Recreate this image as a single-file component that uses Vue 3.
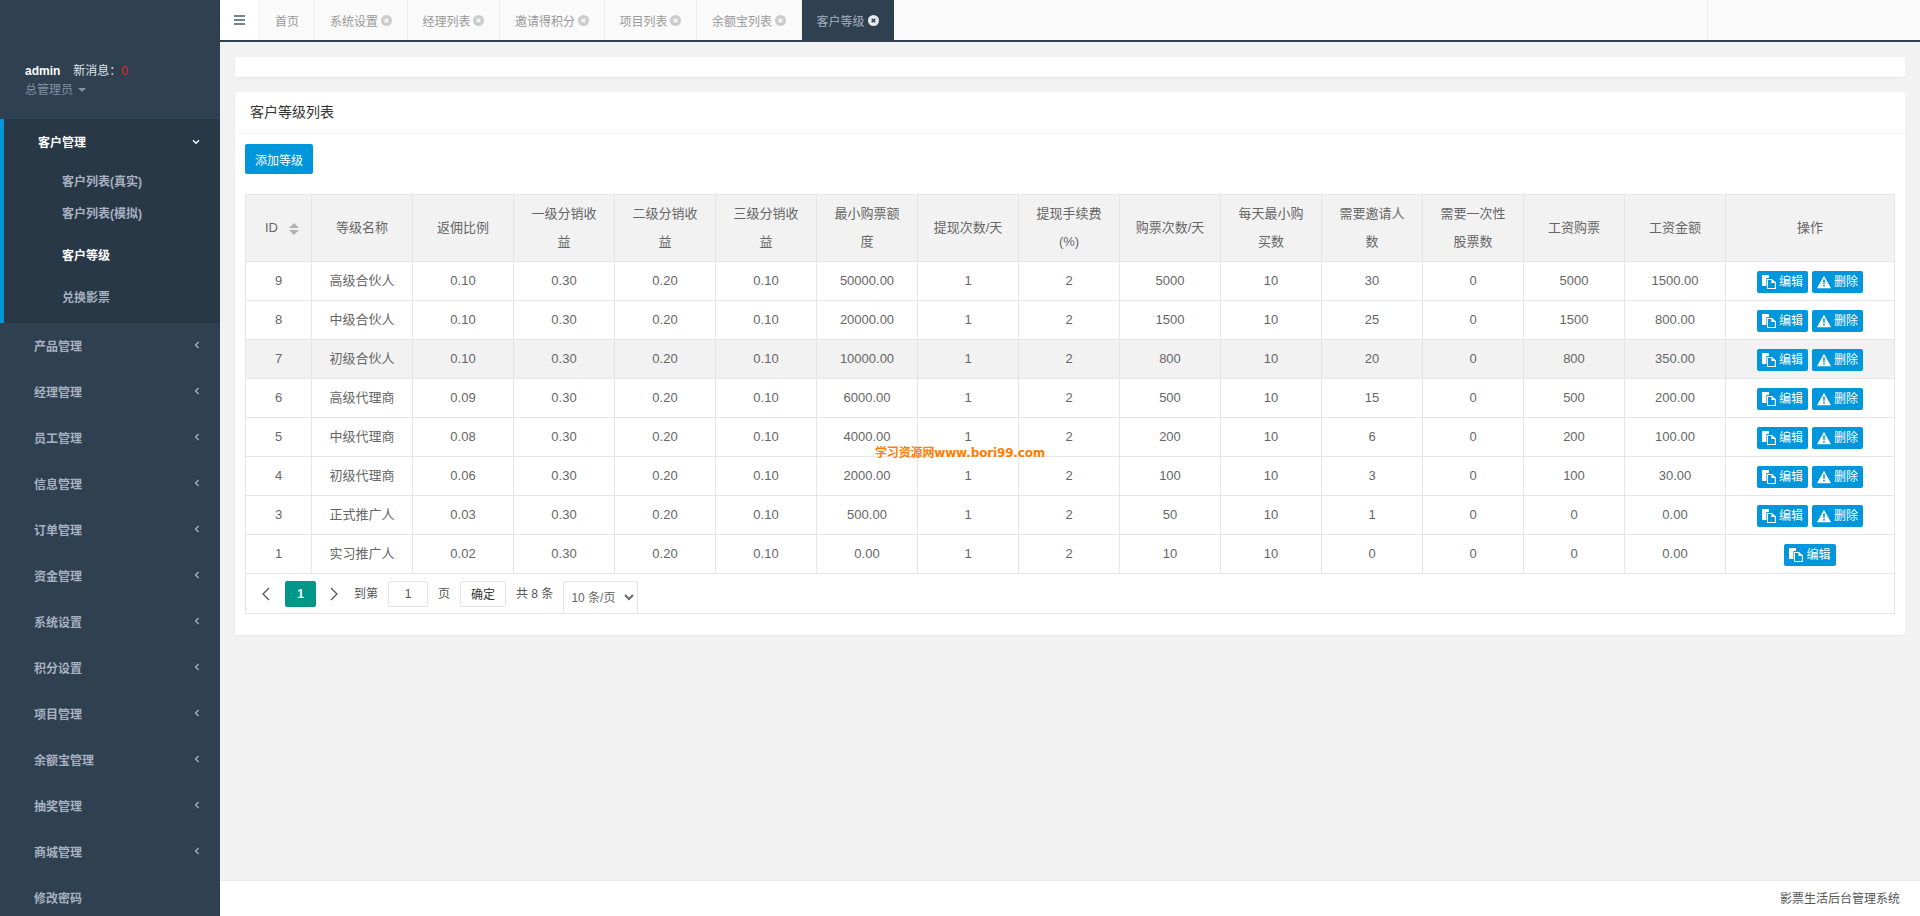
<template>
  <div class="layout">
    <!-- 左侧菜单 -->
    <aside class="sidebar">
      <div class="profile">
        <div class="profile-line">
          <span class="name">admin</span>
          <span class="msg">新消息：<em>0</em></span>
        </div>
        <div class="role">总管理员 <i class="caret"></i></div>
      </div>
      <div class="nav-active">
        <div class="nav-head">
          <span>客户管理</span>
          <svg width="8" height="6" viewBox="0 0 8 6" class="arrow-down"><path d="M1 1.2l3 3 3-3" fill="none" stroke="#fff" stroke-width="1.4"/></svg>
        </div>
        <ul class="sub-nav">
          <li v-for="item in subMenu" :key="item.name" :class="[item.cls, { on: item.on }]">{{ item.name }}</li>
        </ul>
      </div>
      <div v-for="item in menu" :key="item" class="nav-item">
        <span>{{ item }}</span>
        <svg v-if="item !== '修改密码'" width="6" height="8" viewBox="0 0 6 8"><path d="M4.6 1L1.6 4l3 3" fill="none" stroke="#a7b1c2" stroke-width="1.3"/></svg>
      </div>
    </aside>

    <div class="main">
      <!-- 顶部选项卡 -->
      <div class="tabbar">
        <div class="menu-btn">
          <svg width="11" height="10" viewBox="0 0 11 10"><path d="M0 1h11M0 5h11M0 9h11" stroke="#76838f" stroke-width="2"/></svg>
        </div>
        <div v-for="tab in tabs" :key="tab" class="tab">
          {{ tab }}
          <svg v-if="tab !== '首页'" class="close" width="11" height="11" viewBox="0 0 11 11">
            <circle cx="5.5" cy="5.5" r="5.5" fill="#ccc"/>
            <path d="M3.7 3.7l3.6 3.6M7.3 3.7l-3.6 3.6" stroke="#fafafa" stroke-width="1.5"/>
          </svg>
        </div>
        <div class="tab active">
          客户等级
          <svg class="close" width="11" height="11" viewBox="0 0 11 11">
            <circle cx="5.5" cy="5.5" r="5.5" fill="#e8ebee"/>
            <path d="M3.7 3.7l3.6 3.6M7.3 3.7l-3.6 3.6" stroke="#2f4050" stroke-width="1.5"/>
          </svg>
        </div>
        <div class="tab-fill"></div>
        <div class="tab-right"></div>
      </div>

      <div class="content">
        <div class="card blank"></div>
        <div class="card">
          <div class="card-title">客户等级列表</div>
          <div class="card-body">
            <button class="add-btn">添加等级</button>
            <div class="table-box">
              <table>
                <colgroup>
                  <col class="col-id">
                  <col v-for="n in 14" :key="n" class="col-n">
                  <col class="col-op">
                </colgroup>
                <thead>
                  <tr>
                    <th>
                      <span class="sort-wrap">ID<i class="sort"><b class="up"></b><b class="down"></b></i></span>
                    </th>
                    <th v-for="h in headers" :key="h">{{ h }}</th>
                  </tr>
                </thead>
                <tbody>
                  <tr v-for="row in rows" :key="row[0]" :class="{ hover: row[0] === 7 }">
                    <td v-for="(val, i) in row" :key="i">{{ val }}</td>
                    <td>
                      <div class="ops">
                        <button class="op-btn">
                          <svg width="14" height="14" viewBox="0 0 14 14">
                            <path d="M0 0h7v3H4.4v8H0z" fill="#fff"/>
                            <path d="M5 4h5l4 3.6V14H5z" fill="#fff"/>
                            <path d="M6 5h3.4v3h3.4v5H6z" fill="#0096dc"/>
                          </svg>
                          编辑
                        </button>
                        <button v-if="row[0] !== 1" class="op-btn">
                          <svg width="14" height="14" viewBox="0 0 14 14">
                            <path d="M7 .8l7 12.4H0z" fill="#fff"/>
                            <path d="M6.1 4.6h1.8l-.3 4.6H6.4zM6.2 10h1.6v1.6H6.2z" fill="#0096dc"/>
                          </svg>
                          删除
                        </button>
                      </div>
                    </td>
                  </tr>
                </tbody>
              </table>
              <!-- 分页 -->
              <div class="pager">
                <svg class="chev" width="9" height="14" viewBox="0 0 9 14"><path d="M8 1L2 7l6 6" fill="none" stroke="#555" stroke-width="1.3"/></svg>
                <span class="page-cur">1</span>
                <svg class="chev next" width="9" height="14" viewBox="0 0 9 14"><path d="M1 1l6 6-6 6" fill="none" stroke="#555" stroke-width="1.3"/></svg>
                <span class="go">到第</span>
                <input class="page-input" value="1">
                <span class="unit">页</span>
                <button class="ok-btn">确定</button>
                <span class="total">共 8 条</span>
                <select class="size-select">
                  <option>10 条/页</option>
                  <option>20 条/页</option>
                </select>
              </div>
            </div>
          </div>
        </div>
      </div>

      <div class="footer">影票生活后台管理系统</div>
    </div>

    <div class="watermark">学习资源网www.bori99.com</div>
  </div>
</template>

<script setup>
const subMenu = [
  { name: '客户列表(真实)', cls: 'short' },
  { name: '客户列表(模拟)', cls: 'short' },
  { name: '客户等级', cls: 'tall', on: true },
  { name: '兑换影票', cls: 'tall' }
]

const menu = ['产品管理', '经理管理', '员工管理', '信息管理', '订单管理', '资金管理', '系统设置', '积分设置', '项目管理', '余额宝管理', '抽奖管理', '商城管理', '修改密码']

const tabs = ['首页', '系统设置', '经理列表', '邀请得积分', '项目列表', '余额宝列表']

const headers = ['等级名称', '返佣比例', '一级分销收益', '二级分销收益', '三级分销收益', '最小购票额度', '提现次数/天', '提现手续费(%)', '购票次数/天', '每天最小购买数', '需要邀请人数', '需要一次性股票数', '工资购票', '工资金额', '操作']

const rows = [
  [9, '高级合伙人', '0.10', '0.30', '0.20', '0.10', '50000.00', 1, 2, 5000, 10, 30, 0, 5000, '1500.00'],
  [8, '中级合伙人', '0.10', '0.30', '0.20', '0.10', '20000.00', 1, 2, 1500, 10, 25, 0, 1500, '800.00'],
  [7, '初级合伙人', '0.10', '0.30', '0.20', '0.10', '10000.00', 1, 2, 800, 10, 20, 0, 800, '350.00'],
  [6, '高级代理商', '0.09', '0.30', '0.20', '0.10', '6000.00', 1, 2, 500, 10, 15, 0, 500, '200.00'],
  [5, '中级代理商', '0.08', '0.30', '0.20', '0.10', '4000.00', 1, 2, 200, 10, 6, 0, 200, '100.00'],
  [4, '初级代理商', '0.06', '0.30', '0.20', '0.10', '2000.00', 1, 2, 100, 10, 3, 0, 100, '30.00'],
  [3, '正式推广人', '0.03', '0.30', '0.20', '0.10', '500.00', 1, 2, 50, 10, 1, 0, 0, '0.00'],
  [1, '实习推广人', '0.02', '0.30', '0.20', '0.10', '0.00', 1, 2, 10, 10, 0, 0, 0, '0.00']
]
</script>

<style>
body {
  margin: 0;
  overflow: hidden;
}
</style>

<style scoped>
.layout {
  position: relative;
  display: flex;
  height: 916px;
  overflow: hidden;
  font-family: "Liberation Sans", "Noto Sans CJK SC", sans-serif;
  font-size: 13px;
  color: #666;
  background: #f2f2f2;
}

/* 左侧菜单 */
.sidebar {
  width: 220px;
  flex: none;
  background: #2f4050;
  font-size: 12px;
  font-weight: 600;
  color: #a7b1c2;
}
.profile {
  height: 119px;
  padding: 62px 0 0 25px;
  box-sizing: border-box;
}
.profile-line {
  line-height: 18px;
}
.name {
  color: #fff;
  margin-right: 13px;
}
.msg {
  color: #dfe4ed;
  font-weight: 400;
}
.msg em {
  font-style: normal;
  color: #ed1c24;
}
.role {
  margin-top: 1px;
  line-height: 18px;
  font-weight: 400;
  color: #7f93a6;
}
.caret {
  display: inline-block;
  margin-left: 2px;
  vertical-align: 2px;
  border-top: 4px solid #7f93a6;
  border-left: 4px solid transparent;
  border-right: 4px solid transparent;
}
.nav-active {
  height: 204px;
  border-left: 4px solid #0096dc;
  background: #293846;
  box-sizing: border-box;
}
.nav-head {
  display: flex;
  align-items: center;
  justify-content: space-between;
  height: 45px;
  padding: 0 20px 0 34px;
  color: #fff;
}
.sub-nav {
  list-style: none;
  margin: 0;
  padding: 2px 0 0 58px;
}
.sub-nav .short {
  line-height: 32px;
}
.sub-nav .tall {
  line-height: 42px;
}
.sub-nav .short + .tall {
  margin-top: 5px;
}
.sub-nav .on {
  color: #fff;
}
.nav-item {
  display: flex;
  align-items: center;
  justify-content: space-between;
  height: 46px;
  box-sizing: border-box;
  padding: 0 20px 2px 34px;
}

/* 选项卡 */
.main {
  flex: 1;
  min-width: 0;
  display: flex;
  flex-direction: column;
}
.tabbar {
  display: flex;
  height: 42px;
  flex: none;
  box-sizing: border-box;
  border-bottom: 2px solid #2f4050;
  background: #fafafa;
  font-size: 12px;
  color: #999;
}
.menu-btn {
  width: 39px;
  display: flex;
  align-items: center;
  justify-content: center;
  background: #fff;
  border-right: 1px solid #eee;
}
.tab {
  display: flex;
  align-items: center;
  padding: 0 15px;
  border-right: 1px solid #eee;
}
.close {
  margin-left: 2.5px;
}
.tab.active {
  background: #2f4050;
  color: #a7b1c2;
  padding-right: 15px;
  border-right: none;
}
.tab.active .close {
  margin-left: 3px;
}
.tab-fill {
  flex: 1;
}
.tab-right {
  width: 212px;
  border-left: 1px solid #eee;
}

/* 内容区 */
.content {
  flex: 1;
  padding: 15px;
  min-height: 0;
}
.card {
  background: #fff;
  border-radius: 2px;
  box-shadow: 0 1px 2px rgba(0, 0, 0, 0.05);
}
.blank {
  height: 20px;
  margin-bottom: 15px;
}
.card-title {
  height: 41px;
  line-height: 41px;
  padding-left: 15px;
  font-size: 14px;
  color: #333;
  border-bottom: 1px solid #f6f6f6;
}
.card-body {
  padding: 10px 10px 21px;
}
.add-btn {
  display: block;
  width: 68px;
  height: 30px;
  padding: 0;
  border: none;
  border-radius: 2px;
  background: #0096dc;
  color: #fff;
  font: inherit;
  font-size: 12px;
}
.table-box {
  margin-top: 20px;
  border: 1px solid #e6e6e6;
}
table {
  width: 1648px;
  table-layout: fixed;
  border-collapse: separate;
  border-spacing: 0;
}
.col-id {
  width: 66px;
}
.col-n {
  width: 101px;
}
.col-op {
  width: 168px;
}
th, td {
  text-align: center;
  border-right: 1px solid #e6e6e6;
  border-bottom: 1px solid #e6e6e6;
  font-weight: 400;
}
th:last-child, td:last-child {
  border-right: none;
}
th {
  padding: 5px 15px;
  line-height: 28px;
  background: #f2f2f2;
}
td {
  padding: 9px 15px;
  line-height: 20px;
}
tr.hover td {
  background: #f2f2f2;
}
.sort-wrap {
  margin-left: 4px;
  white-space: nowrap;
}
.sort {
  display: inline-block;
  vertical-align: middle;
  margin-left: 11px;
  width: 10px;
}
.sort b {
  display: block;
  border-left: 5px solid transparent;
  border-right: 5px solid transparent;
}
.sort .up {
  border-bottom: 5px solid #b2b2b2;
  margin-bottom: 2px;
}
.sort .down {
  border-top: 5px solid #b2b2b2;
}
.ops {
  display: flex;
  justify-content: center;
  gap: 4px;
  margin: 0 -15px -2px;
}
.op-btn {
  display: flex;
  align-items: center;
  gap: 3px;
  height: 22px;
  padding: 0 5px;
  border: none;
  border-radius: 2px;
  background: #0096dc;
  color: #fff;
  font: inherit;
  font-size: 12px;
  line-height: 22px;
  white-space: nowrap;
}

/* 分页 */
.pager {
  display: flex;
  align-items: flex-start;
  height: 39px;
  box-sizing: border-box;
  padding: 7px 0 0 15px;
  font-size: 12px;
  line-height: 26px;
  color: #555;
}
.chev {
  margin-top: 6px;
}
.page-cur {
  width: 31px;
  height: 26px;
  margin-left: 15px;
  text-align: center;
  background: #009688;
  color: #fff;
  border-radius: 2px;
  font-weight: 600;
}
.next {
  margin-left: 14px;
}
.go {
  margin-left: 15px;
}
.page-input {
  width: 40px;
  height: 26px;
  margin-left: 10px;
  padding: 0;
  box-sizing: border-box;
  border: 1px solid #e6e6e6;
  border-radius: 2px;
  text-align: center;
  font: inherit;
  font-size: 12px;
  color: #555;
}
.unit {
  margin-left: 10px;
}
.ok-btn {
  width: 46px;
  height: 26px;
  margin-left: 10px;
  padding: 0;
  background: #fff;
  border: 1px solid #e6e6e6;
  border-radius: 2px;
  font: inherit;
  font-size: 12px;
  color: #333;
}
.total {
  margin-left: 10px;
}
.size-select {
  width: 75px;
  height: 33px;
  margin-left: 10px;
  padding-left: 3px;
  background: #fff;
  border: 1px solid #e6e6e6;
  border-radius: 2px;
  font: inherit;
  font-size: 12px;
  color: #666;
}

.footer {
  height: 36px;
  flex: none;
  box-sizing: border-box;
  padding-right: 20px;
  line-height: 37px;
  text-align: right;
  background: #fff;
  border-top: 1px solid #e7eaec;
  font-size: 12px;
  color: #555;
}

/* 水印 */
.watermark {
  position: absolute;
  left: 875px;
  top: 444px;
  font-family: "DejaVu Sans", "Noto Sans CJK SC", sans-serif;
  font-size: 12px;
  line-height: 18px;
  font-weight: 700;
  letter-spacing: -0.15px;
  color: #ff7e00;
  white-space: nowrap;
}
</style>
